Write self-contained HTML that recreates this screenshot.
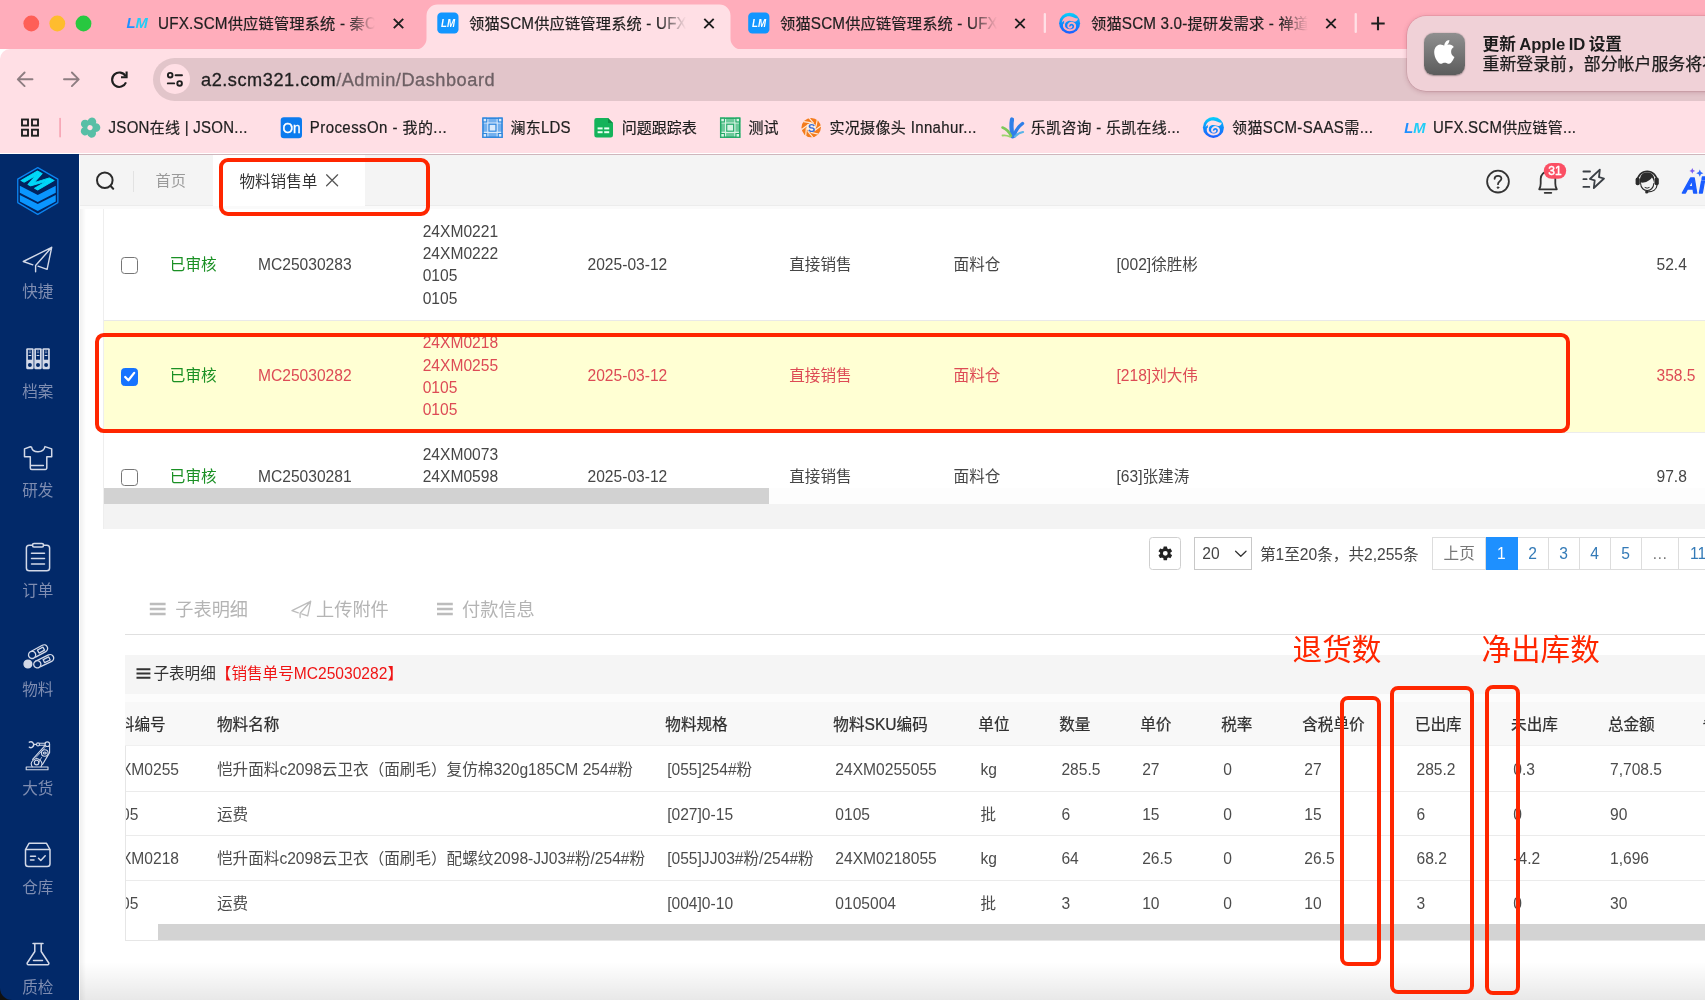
<!DOCTYPE html>
<html lang="zh-CN">
<head>
<meta charset="utf-8">
<title>领猫SCM供应链管理系统</title>
<style>
*{box-sizing:border-box;margin:0;padding:0}
html,body{width:1705px;height:1000px;overflow:hidden;background:#fff}
body{opacity:.999;font-family:"Liberation Sans","Noto Sans CJK SC",sans-serif;color:#333;position:relative}
.abs{position:absolute}
.t{position:absolute;white-space:nowrap;line-height:24px;height:24px}
/* ---------- browser chrome ---------- */
#tabstrip{left:0;top:0;width:1705px;height:49px;background:#ffadbb}
#toolbar{left:0;top:49px;width:1705px;height:104px;background:#ffdfe5;border-top-left-radius:10px}
#chromeline{left:0;top:153.7px;width:1705px;height:1.2px;background:#cfb6bc}
.tabtxt{-webkit-text-stroke:.22px #1f1f1f;font-size:15.25px;letter-spacing:.15px;margin-top:.6px;color:#1f1f1f;overflow:hidden}
.L{display:inline-block;white-space:pre;transform:scaleY(1.07);transform-origin:0 17.3px}
.bm{-webkit-text-stroke:.22px #1f1f1f;font-size:15px;color:#1f1f1f;margin-top:.6px}
/* ---------- app ---------- */
#sidebar{left:0;top:154px;width:79.2px;height:846px;background:#022969}
.sl{position:absolute;left:0;margin-top:.8px;width:75.6px;text-align:center;font-size:15.6px;color:#7f8db1;line-height:22px}
#apphead{left:79.5px;top:154.5px;width:1626px;height:51.5px;background:#f4f4f4;border-bottom:1px solid #ececec}
.c{position:absolute;white-space:nowrap;font-size:15.6px;line-height:22.3px;height:22.3px;color:#464646;margin-top:1px}
.red{color:#dd4b55}
.grn{color:#1a9024}
.cb{position:absolute;left:120.9px;width:17.2px;height:17.2px;border:1.4px solid #767676;border-radius:3.6px;background:#fff}
.pg{position:absolute;top:537.3px;height:32.5px;border:1px solid #ddd;border-left:0;background:#fff;font-size:15.6px;line-height:32.3px;text-align:center;color:#337ab7}
.th{position:absolute;white-space:nowrap;font-size:15.6px;line-height:22px;height:22px;color:#303030;font-weight:400;-webkit-text-stroke:.24px #303030;top:713.3px;margin-top:1px}
.td{position:absolute;white-space:nowrap;font-size:15.6px;line-height:22px;height:22px;color:#4c4c4c;margin-top:.8px}
.st{position:absolute;white-space:nowrap;font-size:18.2px;line-height:26px;height:26px;color:#b4b4b4;top:596.5px}
.ann{position:absolute;border:4.1px solid #ff2600;border-radius:8px}
.annt{position:absolute;white-space:nowrap;font-size:29.6px;line-height:40px;height:40px;color:#ff2600;top:629.8px}
</style>
</head>
<body>
<!-- ================= BROWSER CHROME ================= -->
<div id="tabstrip" class="abs"></div>
<div id="toolbar" class="abs"></div>
<div id="chromeline" class="abs"></div>

<!-- tab strip -->
<svg class="abs" style="left:0;top:0" width="1705" height="50" viewBox="0 0 1705 50">
  <path d="M415.5 49.5 A11 11 0 0 0 426.5 38.5 L426.5 15.5 A11 11 0 0 1 437.5 4.5 L719.5 4.5 A11 11 0 0 1 730.5 15.5 L730.5 38.5 A11 11 0 0 0 741.5 49.5 Z" fill="#ffdfe5"/>
  <circle cx="31.3" cy="23.5" r="7.9" fill="#fe5f57"/>
  <circle cx="57.3" cy="23.5" r="7.9" fill="#febc2e"/>
  <circle cx="83.5" cy="23.5" r="7.9" fill="#28c840"/>
  <!-- tab1 favicon LM -->
  <text x="126.500" y="28.300" font-family="Liberation Sans, sans-serif" font-size="14.600" font-weight="700" font-style="italic" textLength="21.300" lengthAdjust="spacingAndGlyphs"><tspan fill="#1f8fff">L</tspan><tspan fill="#21cdf6">M</tspan></text>
  <!-- tab2 favicon -->
  <rect x="437.3" y="12.6" width="21.2" height="21" rx="4.2" fill="#1296ff"/>
  <text x="441" y="27.4" font-family="Liberation Sans, sans-serif" font-size="10.5" font-weight="700" font-style="italic" fill="#fff" textLength="14" lengthAdjust="spacingAndGlyphs">LM</text>
  <!-- tab3 favicon -->
  <rect x="748.2" y="12.6" width="21.2" height="21" rx="4.2" fill="#1296ff"/>
  <text x="752" y="27.4" font-family="Liberation Sans, sans-serif" font-size="10.5" font-weight="700" font-style="italic" fill="#fff" textLength="14" lengthAdjust="spacingAndGlyphs">LM</text>
  <!-- tab4 favicon swirl -->
  <g transform="translate(1069.6 23.2)">
    <defs><linearGradient id="sg1" x1="0" y1="0" x2="0" y2="1"><stop offset="0" stop-color="#08d2fb"/><stop offset=".5" stop-color="#0d8ffb"/><stop offset="1" stop-color="#1f5cff"/></linearGradient></defs>
    <circle r="10.5" fill="url(#sg1)"/>
    <path d="M-7.800 .200 C-7.600 -4.800 -3.600 -7.300 0 -6.900 C3.500 -6.500 5.600 -4.400 8.400 -4.700 C8.100 -2.600 6.600 -1.400 5 -1.500 C3 -1.700 1.200 -2.900 -1.300 -2.300 C-3.800 -1.700 -4.700 .400 -4.800 2.200 C-5.400 1 -5.900 -.600 -5.300 -2.500 C-6.700 -2 -7.500 -1 -7.800 .200 Z" fill="#ffadbb"/>
    <path d="M-5.600 1.400 C-6.200 5.400 -2 7.900 2.500 6.700 C6.200 5.700 6.500 1.500 3.400 0 C.800 -1.200 -1.900 1 -1.300 3.300 C-.800 4.900 1.500 4.800 1.900 3.300" fill="none" stroke="#ffadbb" stroke-width="2" stroke-linecap="round"/>
  </g>
  <!-- close x -->
  <g stroke="#1f1f1f" stroke-width="1.9" stroke-linecap="butt" fill="none">
    <path d="M393.8 18.8 l9.4 9.4 M403.2 18.8 l-9.4 9.4"/>
    <path d="M704.3 18.8 l9.4 9.4 M713.7 18.8 l-9.4 9.4"/>
    <path d="M1015.3 18.8 l9.4 9.4 M1024.7 18.8 l-9.4 9.4"/>
    <path d="M1326.3 18.8 l9.4 9.4 M1335.7 18.8 l-9.4 9.4"/>
    <path d="M1371.3 23.5 h13.4 M1378 16.8 v13.4" stroke-width="2.1"/>
  </g>
  <rect x="1043.700" y="13" width="2.300" height="20" rx="1.100" fill="#ffe0e6"/>
  <rect x="1354.600" y="13" width="2.300" height="20" rx="1.100" fill="#ffe0e6"/>
</svg>
<div class="t tabtxt" style="left:158px;top:11px;width:219px;-webkit-mask-image:linear-gradient(90deg,#000 190px,transparent 217px)"><span class="L">UFX.SCM</span>供应链管理系统<span class="L"> - </span>秦<span class="L">C</span></div>
<div class="t tabtxt" style="left:469px;top:11px;width:219px;-webkit-mask-image:linear-gradient(90deg,#000 190px,transparent 217px)">领猫<span class="L">SCM</span>供应链管理系统<span class="L"> - UFX</span></div>
<div class="t tabtxt" style="left:780px;top:11px;width:219px;-webkit-mask-image:linear-gradient(90deg,#000 190px,transparent 217px)">领猫<span class="L">SCM</span>供应链管理系统<span class="L"> - UFX</span></div>
<div class="t tabtxt" style="left:1091px;top:11px;width:219px;-webkit-mask-image:linear-gradient(90deg,#000 190px,transparent 217px)">领猫<span class="L">SCM 3.0-</span>提研发需求<span class="L"> - </span>禅道</div>

<!-- toolbar -->
<div class="abs" style="left:153.3px;top:57.5px;width:1600px;height:43.4px;border-radius:21.7px;background:#e2c5ca"></div>
<div class="abs" style="left:159.8px;top:64.2px;width:30px;height:30px;border-radius:15px;background:#ffdfe5"></div>
<svg class="abs" style="left:0;top:49px" width="200" height="60" viewBox="0 49 200 60" fill="none" stroke-linecap="round" stroke-linejoin="round">
  <path d="M32.5 79.3 H18 M24.6 72.5 L17.8 79.3 L24.6 86.1" stroke="#8d7d81" stroke-width="1.9"/>
  <path d="M64 79.3 H78.5 M71.9 72.5 L78.7 79.3 L71.9 86.1" stroke="#8d7d81" stroke-width="1.9"/>
  <path d="M125.6 76.2 A7.2 7.2 0 1 0 126 82.4" stroke="#1f1f1f" stroke-width="2.1" stroke-linecap="butt"/>
  <path d="M126.6 71.6 V77.2 H121" stroke="#1f1f1f" stroke-width="2.1" stroke-linecap="butt" stroke-linejoin="miter"/>
  <g stroke="#1f1f1f" stroke-width="1.9">
    <circle cx="170.2" cy="75.2" r="2.3"/><path d="M175.6 75.2 H182"/>
    <circle cx="179.6" cy="83.4" r="2.3"/><path d="M167.8 83.4 H174.2"/>
  </g>
</svg>
<div class="t" style="left:201px;top:68.1px;font-size:18.2px;letter-spacing:.52px;-webkit-text-stroke:.3px;color:#1f1f1f">a2.scm321.com<span style="color:#6d6064">/Admin/Dashboard</span></div>

<!-- notification -->
<div class="abs" style="left:1407px;top:16.4px;width:340px;height:74.4px;border-radius:19px;background:#f0d1d7;box-shadow:0 1px 5px rgba(120,40,60,.28),0 0 0 .5px rgba(160,90,105,.25)"></div>
<div class="abs" style="left:1423.8px;top:32.8px;width:41.4px;height:42px;border-radius:9.5px;background:linear-gradient(#8f8f8f,#5c5c5c);box-shadow:0 .5px 1.5px rgba(0,0,0,.35)"></div>
<svg class="abs" style="left:1434.200px;top:40.400px" width="22.600" height="27.800" viewBox="0 0 170 200" preserveAspectRatio="none"><path fill="#fff" d="M150.4 130.3c-2.8 6.4-6 12.300-9.800 17.700-5.100 7.300-9.300 12.300-12.500 15.100-5 4.600-10.300 6.900-16.100 7.100-4.100 0-9.100-1.200-14.800-3.600-5.800-2.400-11.100-3.500-15.900-3.500-5.100 0-10.600 1.200-16.400 3.500-5.900 2.400-10.600 3.700-14.200 3.800-5.500.2-11-2.200-16.500-7.300-3.500-3-7.900-8.300-13.100-15.700-5.600-7.900-10.300-17.100-13.900-27.600C3.300 108.500 1.400 97.500 1.400 86.900c0-12.200 2.600-22.700 7.900-31.500 4.100-7.100 9.700-12.600 16.500-16.700 6.900-4.100 14.300-6.200 22.300-6.300 4.400 0 10.100 1.400 17.200 4 7.100 2.700 11.600 4 13.600 4 1.500 0 6.600-1.600 15.200-4.700 8.100-2.900 15-4.100 20.600-3.700 15.200 1.200 26.700 7.200 34.300 18-13.600 8.200-20.400 19.800-20.200 34.600.1 11.500 4.300 21.100 12.500 28.700 3.700 3.500 7.900 6.200 12.500 8.200-1 2.900-2.100 5.700-3.200 8.400zM115.500 3.900c0 9-3.300 17.500-9.900 25.300-8 9.300-17.600 14.700-28 13.800-.1-1.100-.2-2.200-.2-3.400 0-8.700 3.800-18 10.500-25.600 3.400-3.900 7.600-7.100 12.800-9.600C105.900 1.900 110.800.6 115.400.3c.1 1.200.1 2.400.1 3.600z"/></svg>
<div class="t" style="left:1482.5px;top:32.6px;font-size:16.7px;font-weight:700;word-spacing:-1.2px;letter-spacing:-.05px;color:#1c1c1c">更新 Apple ID 设置</div>
<div class="t" style="left:1482.5px;top:53.3px;font-size:16.9px;-webkit-text-stroke:.25px;color:#1c1c1c">重新登录前，部分帐户服务将不</div>

<!-- bookmarks bar -->
<svg class="abs" style="left:0;top:104px" width="1705" height="48" viewBox="0 104 1705 48">
  <!-- apps grid -->
  <g fill="none" stroke="#1f1f1f" stroke-width="1.9">
    <rect x="22" y="119.5" width="6" height="6"/><rect x="32" y="119.5" width="6" height="6"/>
    <rect x="22" y="129.7" width="6" height="6"/><rect x="32" y="129.7" width="6" height="6"/>
  </g>
  <rect x="59.3" y="117.8" width="1.6" height="19.8" rx=".8" fill="#f7a2b1"/>
  <!-- JSON flower -->
  <g transform="translate(90 127.6) rotate(19)" fill="#57bfa6">
    <circle cx="0" cy="-6" r="4.3"/><circle cx="5.7" cy="-1.9" r="4.3"/><circle cx="3.5" cy="4.9" r="4.3"/><circle cx="-3.5" cy="4.9" r="4.3"/><circle cx="-5.7" cy="-1.9" r="4.3"/><circle r="5.5"/>
    <circle r="2.6" fill="#ffdfe5"/>
  </g>
  <!-- ProcessOn -->
  <rect x="280.7" y="117.3" width="21.3" height="21" rx="3.2" fill="#0b7bee"/>
  <text x="282.400" y="133.100" font-family="Liberation Sans, sans-serif" font-size="15" font-weight="400" fill="#fff" stroke="#fff" stroke-width=".35" textLength="18.200" lengthAdjust="spacingAndGlyphs">On</text>
  <!-- LDS grid -->
  <g>
    <rect x="482.3" y="117.5" width="20.4" height="20.4" fill="#74b0ee"/>
    <path d="M487.81 117.5 V137.9 M497.19 117.5 V137.9 M482.3 123.01 H502.7 M482.3 132.39 H502.7" stroke="#d9e9fb" stroke-width="1.1" fill="none"/>
    <rect x="483.0" y="118.2" width="19.0" height="19.0" fill="none" stroke="#2f86dc" stroke-width="1.5"/>
    <g fill="#d9e9fb" stroke="#2f86dc" stroke-width="1"><rect x="483.1" y="118.3" width="3.6" height="3.6"/><rect x="498.30" y="118.3" width="3.6" height="3.6"/><rect x="483.1" y="133.50" width="3.6" height="3.6"/><rect x="498.30" y="133.50" width="3.6" height="3.6"/>
    <rect x="489.10" y="124.30" width="6.8" height="6.8"/></g>
  </g>
  <!-- sheets -->
  <path d="M596.6 118 H608 L613 123 V135.2 A2.3 2.3 0 0 1 610.700 137.500 H596.6 A2.300 2.300 0 0 1 594.300 135.200 V120.300 A2.300 2.300 0 0 1 596.600 118 Z" fill="#14b35a"/>
  <path d="M608 118 L613 123 H608 Z" fill="#0c8e44"/>
  <g fill="#e8fff1"><rect x="597.6" y="127.4" width="5" height="2"/><rect x="604.2" y="127.4" width="5" height="2"/><rect x="597.6" y="131.2" width="5" height="2"/><rect x="604.2" y="131.2" width="5" height="2"/></g>
  <!-- test grid -->
  <g>
    <rect x="720" y="117.5" width="20.4" height="20.4" fill="#6cc99a"/>
    <path d="M725.51 117.5 V137.9 M734.89 117.5 V137.9 M720 123.01 H740.4 M720 132.39 H740.4" stroke="#d8f3e4" stroke-width="1.1" fill="none"/>
    <rect x="720.7" y="118.2" width="19.0" height="19.0" fill="none" stroke="#22a866" stroke-width="1.5"/>
    <g fill="#d8f3e4" stroke="#22a866" stroke-width="1"><rect x="720.8" y="118.3" width="3.6" height="3.6"/><rect x="736.00" y="118.3" width="3.6" height="3.6"/><rect x="720.8" y="133.50" width="3.6" height="3.6"/><rect x="736.00" y="133.50" width="3.6" height="3.6"/>
    <rect x="726.80" y="124.30" width="6.8" height="6.8"/></g>
  </g>
  <!-- orange camera icon -->
  <g transform="translate(811.2 127.6)">
    <circle r="9.7" fill="#f47b1c"/>
    <g stroke="#ffe9d6" stroke-width="1.2"><path d="M-2 -9.5 L2.500 -4.300 M6 -7.600 L4.800 -1 M9.500 -1.500 L3.500 2.800 M7.200 6.500 L-.5 4.800 M1.500 9.500 L-3.500 3.500 M-5.500 8 L-4.800 .5 M-9.500 2 L-3 -2.800 M-7.500 -6 L.5 -4.800"/></g>
    <circle r="4.700" fill="#fff1e4"/>
    <text x="-3.100" y="4" font-family="Liberation Sans, sans-serif" font-size="11" font-weight="700" fill="#3b6fd6">S</text>
  </g>
  <!-- lucky leaf fan -->
  <g transform="translate(1012.5 136.5)" stroke-linecap="round" fill="none">
    <path d="M0 0 C-1 -6 -1.5 -12 -0.5 -17" stroke="#2f7fe8" stroke-width="4.2"/>
    <path d="M1.5 -0.5 C3 -6 6 -10 10 -13" stroke="#2f7fe8" stroke-width="3.4"/>
    <path d="M-1.5 -0.5 C-3 -4 -6 -7.5 -10 -9" stroke="#7cc85a" stroke-width="2.6"/>
    <path d="M2.500 0 C5 -2.500 7.500 -4 10.500 -4.500" stroke="#58b4e8" stroke-width="2.2"/>
    <path d="M-2.500 0.300 C-5 -1 -7.500 -1.500 -10 -1" stroke="#9bd46a" stroke-width="1.8"/>
  </g>
  <!-- swirl -->
  <g transform="translate(1213.4 127.4)">
    <defs><linearGradient id="sg2" x1="0" y1="0" x2="0" y2="1"><stop offset="0" stop-color="#08d2fb"/><stop offset=".5" stop-color="#0d8ffb"/><stop offset="1" stop-color="#1f5cff"/></linearGradient></defs>
    <circle r="10.5" fill="url(#sg2)"/>
    <path d="M-7.800 .200 C-7.600 -4.800 -3.600 -7.300 0 -6.900 C3.500 -6.500 5.600 -4.400 8.400 -4.700 C8.100 -2.600 6.600 -1.400 5 -1.500 C3 -1.700 1.200 -2.900 -1.300 -2.300 C-3.800 -1.700 -4.700 .400 -4.800 2.200 C-5.400 1 -5.900 -.600 -5.300 -2.500 C-6.700 -2 -7.500 -1 -7.800 .200 Z" fill="#ffdfe5"/>
    <path d="M-5.600 1.400 C-6.200 5.400 -2 7.900 2.500 6.700 C6.200 5.700 6.500 1.500 3.400 0 C.800 -1.200 -1.900 1 -1.300 3.300 C-.800 4.900 1.500 4.800 1.900 3.300" fill="none" stroke="#ffdfe5" stroke-width="2" stroke-linecap="round"/>
  </g>
  <text x="1404.300" y="132.500" font-family="Liberation Sans, sans-serif" font-size="14.600" font-weight="700" font-style="italic" textLength="21.300" lengthAdjust="spacingAndGlyphs"><tspan fill="#1f8fff">L</tspan><tspan fill="#21cdf6">M</tspan></text>
</svg>
<div class="t bm" style="left:108.6px;top:115.3px;letter-spacing:.27px"><span class="L">JSON</span>在线<span class="L"> | JSON...</span></div>
<div class="t bm" style="left:309.8px;top:115.3px;letter-spacing:.43px"><span class="L">ProcessOn - </span>我的<span class="L">...</span></div>
<div class="t bm" style="left:510.6px;top:115.3px;letter-spacing:.2px">澜东<span class="L">LDS</span></div>
<div class="t bm" style="left:621.8px;top:115.3px">问题跟踪表</div>
<div class="t bm" style="left:748.6px;top:115.3px">测试</div>
<div class="t bm" style="left:829.4px;top:115.3px;letter-spacing:.35px">实况摄像头<span class="L"> Innahur...</span></div>
<div class="t bm" style="left:1030.8px;top:115.3px;letter-spacing:.26px">乐凯咨询<span class="L"> - </span>乐凯在线<span class="L">...</span></div>
<div class="t bm" style="left:1232px;top:115.3px;letter-spacing:.39px">领猫<span class="L">SCM-SAAS</span>需<span class="L">...</span></div>
<div class="t bm" style="left:1433px;top:115.3px;letter-spacing:.23px"><span class="L">UFX.SCM</span>供应链管<span class="L">...</span></div>

<!-- ================= APP ================= -->
<div id="sidebar" class="abs"></div>

<!-- sidebar -->
<svg class="abs" style="left:0;top:154px" width="80" height="846" viewBox="0 154 80 846" fill="none" stroke="#d3d9e8" stroke-width="1.5" stroke-linejoin="round" stroke-linecap="round">
  <!-- logo -->
  <g stroke="none">
    <path d="M37.76 167.6 L57.85 179.15 V202.6 L37.76 214.4 L17.74 202.6 V179.15 Z" fill="#02235f" stroke="#0b84f0" stroke-width="1.3"/>
    <path d="M19.84 185.8 L37.76 195.04 L55.75 185.8 V192.8 L37.76 202.04 L19.84 192.8 Z" fill="#0a96ff"/>
    <path d="M19.84 194.9 L37.76 204 L55.75 194.9 V201.55 L37.76 211 L19.84 201.55 Z" fill="#0a96ff"/>
    <text transform="matrix(0.866 0.5 -0.866 0.5 37.76 180.3)" x="-11.4" y="9.6" font-family="Liberation Sans, sans-serif" font-size="27.4" font-weight="700" fill="#00d8f8" stroke="#00d8f8" stroke-width="1.1" stroke-linejoin="round">M</text>
  </g>
  <!-- 快捷 paper plane -->
  <path d="M51.700 247.300 L23.300 261.500 L32.800 264.800 M51.700 247.300 L35.600 265.500 V271.800 M51.700 247.300 L47.100 269.300 L38 266.200" stroke-width="1.400"/>
  <!-- 档案 binders -->
  <g stroke="none" fill="#d3d9e8">
    <rect x="26.200" y="348.200" width="7.400" height="21" rx="1.100"/><rect x="34.300" y="348.200" width="7.400" height="21" rx="1.100"/><rect x="42.400" y="348.200" width="7.400" height="21" rx="1.100"/>
  </g>
  <g stroke="none" fill="#022969">
    <rect x="27.900" y="349.800" width="4" height="9.900"/><rect x="36" y="349.800" width="4" height="9.900"/><rect x="44.100" y="349.800" width="4" height="9.900"/>
    <circle cx="29.900" cy="365.100" r="2"/><circle cx="38" cy="365.100" r="2"/><circle cx="46.100" cy="365.100" r="2"/>
  </g>
  <g stroke="#d3d9e8" stroke-linecap="butt"><path d="M28.700 351 h2.400 M28.700 352.700 h2.400 M36.800 351 h2.400 M36.800 352.700 h2.400 M44.900 351 h2.400 M44.900 352.700 h2.400" stroke-width=".8" opacity=".75"/><path d="M28.500 355.500 h2.800 M36.600 355.500 h2.800 M44.700 355.500 h2.800" stroke-width="1.100"/></g>
  <!-- 研发 tshirt -->
  <path d="M30.300 446.800 L24.500 448.900 V456.700 H30.300 V468 A1.500 1.500 0 0 0 31.800 469.500 H45.300 A1.500 1.500 0 0 0 46.800 468 V456.700 H51.700 V448.900 L45 446.600 C43.500 453.200 32.800 453.400 31.600 447.300 Z M31.200 465.500 H43.400"/>
  <!-- 订单 clipboard -->
  <path d="M32.500 545.200 H29.200 A2.800 2.800 0 0 0 26.400 548 V568 A2.800 2.800 0 0 0 29.200 570.800 H46.800 A2.800 2.800 0 0 0 49.600 568 V548 A2.800 2.800 0 0 0 46.800 545.200 H43.500"/>
  <rect x="32.500" y="543.400" width="11" height="3.600" rx="1.500"/>
  <path d="M31.500 553.200 H44.500 M31.500 558.600 H44.500 M31.500 564 H44.500"/>
  <!-- 物料 rolls -->
  <g stroke-width="1.3">
    <g transform="translate(32.1 654.9) rotate(-28.5)"><path d="M0 -3.6 H13.6 A3.6 3.6 0 0 1 13.6 3.6 H2"/><rect x="7" y="-1.7" width="6.2" height="3.4"/><circle r="3.6" fill="#022969"/></g>
    <g transform="translate(37.3 664.3) rotate(-25.5)"><path d="M0 -3.6 H14.2 A3.6 3.600 0 0 1 14.200 3.600 H2"/><rect x="7.300" y="-1.700" width="6.200" height="3.400"/><circle r="3.600" fill="#022969"/></g>
    <circle cx="27.9" cy="664" r="3.9" fill="#d3d9e8"/>
  </g>
  <!-- 大货 robot arm -->
  <g stroke-width="1.1">
    <rect x="26.2" y="767" width="21.8" height="2.8"/>
    <path d="M32.2 766.800 A5.200 5.200 0 1 1 41 766.800"/>
    <circle cx="36.600" cy="762.600" r="2.300"/>
    <path d="M32.600 759.300 L45.200 745.300 M42.500 764.500 L49.600 752.600 V744.500"/>
    <path d="M38.500 763 L41.500 757.500 M36 757.500 L45 747.500" stroke-width=".8"/>
    <circle cx="44.800" cy="753" r="3.300"/><ellipse cx="44.800" cy="753" rx="1.500" ry="1"/>
    <circle cx="47.300" cy="744.200" r="2.300"/>
    <path d="M45.200 743.300 H39.500 M45.200 745.300 H39.500 M36.500 744.400 H34.300"/>
    <circle cx="38" cy="744.400" r="1.500"/>
    <path d="M29.300 742.200 A2.900 2.900 0 1 1 29.300 747.200" stroke-width="1.400"/>
  </g>
  <!-- 仓库 box -->
  <path d="M25.500 849.500 L29 843.300 H46.500 L50 849.500 V863.800 A2.800 2.800 0 0 1 47.200 866.600 H28.300 A2.800 2.800 0 0 1 25.500 863.800 Z M25.500 849.500 H50"/>
  <path d="M30.500 856.200 H35.500 M30.500 860 H34 M38.500 858.300 L40.800 860.500 L45.200 855.800"/>
  <!-- 质检 flask -->
  <path d="M33 943.600 H43 M34.800 943.600 V951.500 L27.200 963 A1.300 1.300 0 0 0 28.300 964.800 H47.700 A1.300 1.300 0 0 0 48.800 963 L41.200 951.500 V943.600 M33.500 960.600 H42.500"/>
  <!-- window corner -->
  <path d="M0 988 V1000 H12 A12 12 0 0 1 0 988 Z" fill="#111" stroke="none"/>
</svg>
<div class="sl" style="top:280.700px">快捷</div>
<div class="sl" style="top:380px">档案</div>
<div class="sl" style="top:479.700px">研发</div>
<div class="sl" style="top:579px">订单</div>
<div class="sl" style="top:678px">物料</div>
<div class="sl" style="top:777.600px">大货</div>
<div class="sl" style="top:876.200px">仓库</div>
<div class="sl" style="top:976px">质检</div>
<div class="abs" style="left:79.500px;top:154.500px;width:6px;height:846px;background:linear-gradient(90deg,rgba(0,0,0,.06),rgba(0,0,0,0))"></div>
<div id="apphead" class="abs"></div>

<!-- app header -->
<div class="abs" style="left:79.5px;top:206px;width:1626px;height:3px;background:#fafafa"></div>
<div class="abs" style="left:213px;top:154.5px;width:152.3px;height:51.5px;background:#fff"></div>
<div class="abs" style="left:132.600px;top:171px;width:1.3px;height:21px;background:#e2e2e2"></div>
<svg class="abs" style="left:90px;top:160px" width="300" height="44" viewBox="90 160 300 44" fill="none" stroke="#2b2b2b" stroke-linecap="round">
  <circle cx="104.800" cy="180.300" r="7.800" stroke-width="2"/><path d="M110.600 186.100 L113.200 188.700" stroke-width="2.1"/>
  <path d="M326.600 174.800 L337.600 185.800 M337.600 174.800 L326.600 185.800" stroke="#555" stroke-width="1.25"/>
</svg>
<div class="c" style="left:155.600px;top:168.800px;color:#9a9a9a;font-size:15.2px">首页</div>
<div class="c" style="left:239.400px;top:169.600px;color:#333">物料销售单</div>
<svg class="abs" style="left:1480px;top:158px" width="225" height="44" viewBox="1480 158 225 44" fill="none" stroke="#333" stroke-width="1.8" stroke-linecap="round" stroke-linejoin="round">
  <circle cx="1498" cy="181.600" r="10.900"/>
  <path d="M1494.600 178.800 C1494.600 174.800 1501.500 174.900 1501.400 178.700 C1501.300 181 1498 181.300 1498 184.200" />
  <circle cx="1498" cy="187.600" r=".8" fill="#333" stroke-width="1"/>
  <!-- bell -->
  <path d="M1539.200 189.300 H1556.800 C1555.700 187.600 1555.300 185.500 1555.300 183.500 V178.800 A7.300 7.300 0 0 0 1540.700 178.800 V183.500 C1540.700 185.500 1540.300 187.600 1539.200 189.300 Z M1544.700 192.800 H1551.300"/>
  <rect x="1543.800" y="163" width="22.400" height="15.700" rx="7.850" fill="#fb4f64" stroke="none"/>
  <text x="1548.200" y="175.200" font-family="Liberation Sans, sans-serif" font-size="12.400" font-weight="400" fill="#fff" stroke="#fff" stroke-width=".45" textLength="13.400" lengthAdjust="spacingAndGlyphs">31</text>
  <!-- lightning -->
  <g stroke="#3a3f45">
  <path d="M1583.400 171.500 H1590 M1583.400 179.200 H1586.600 M1583.400 186.900 H1589.300"/>
  <path d="M1599.800 169.600 L1589.900 179 L1594.700 180.300 L1593.800 188 L1604 178.500 L1599 177.200 Z"/>
  </g>
  <!-- headset -->
  <path d="M1637.400 181 A9.800 9.800 0 0 1 1657 181" stroke="#2b2b2b" stroke-width="1.700"/>
  <g stroke="none" fill="#2b2b2b">
    <rect x="1635.600" y="177.600" width="4.200" height="7.600" rx="1.900"/><rect x="1654.600" y="177.600" width="4.200" height="7.600" rx="1.900"/>
    <path d="M1640.300 184 C1638.800 176.500 1642 172.300 1647.200 172.300 C1652.400 172.300 1655.600 176.500 1654.100 184 C1653.900 180.800 1653 178.500 1651.900 177.500 C1649.500 181.300 1644 183.200 1641.300 182.500 C1640.800 182.900 1640.500 183.400 1640.300 184 Z"/>
    <circle cx="1646.700" cy="191.900" r="1.600"/>
  </g>
  <path d="M1640.600 183.500 C1641 192.800 1653.400 192.800 1653.800 183.500" stroke="#2b2b2b" stroke-width="1.100"/>
  <path d="M1657 185.200 C1656.600 189.600 1652.500 191.900 1648 191.900" stroke="#2b2b2b" stroke-width="1.200"/>
  <path d="M1645 187.600 Q1647.100 188.900 1649.200 187.600" stroke="#2b2b2b" stroke-width="1"/>
  <!-- Ai -->
  <text x="1682.800" y="193.400" font-family="Liberation Sans, sans-serif" font-size="21.5" font-weight="700" font-style="italic" fill="#1a5cff" stroke="#1a5cff" stroke-width="1.300" stroke-linejoin="round" letter-spacing=".6">Ai</text>
  <path d="M1692.300 168 l.9 2 2 .9 -2 .9 -.9 2 -.9 -2 -2 -.9 2 -.9z" fill="#7a5cf0" stroke="none"/>
  <path d="M1699.800 169.600 l1.100 2.500 2.500 1.100 -2.500 1.100 -1.100 2.500 -1.100 -2.500 -2.500 -1.100 2.500 -1.100z" fill="#2f6bff" stroke="none"/>
</svg>

<!-- main table -->
<div class="abs" style="left:103px;top:209px;width:1px;height:320px;background:#eeeeee"></div>
<div class="abs" style="left:103.500px;top:319.600px;width:1602px;height:1px;background:#e9e9e9"></div>
<div class="abs" style="left:103.500px;top:320.600px;width:1602px;height:111px;background:#ffffd3"></div>
<div class="abs" style="left:103.500px;top:431.600px;width:1602px;height:1px;background:#ececec"></div>

<div class="cb" style="top:256.800px"></div>
<div class="c grn" style="left:169.800px;top:253.200px">已审核</div>
<div class="c" style="left:258px;top:253.200px">MC25030283</div>
<div class="c" style="left:422.700px;top:219.600px">24XM0221</div>
<div class="c" style="left:422.700px;top:241.900px">24XM0222</div>
<div class="c" style="left:422.700px;top:264.200px">0105</div>
<div class="c" style="left:422.700px;top:286.500px">0105</div>
<div class="c" style="left:587.500px;top:253.200px">2025-03-12</div>
<div class="c" style="left:789.200px;top:253.200px">直接销售</div>
<div class="c" style="left:953.600px;top:253.200px">面料仓</div>
<div class="c" style="left:1116.500px;top:253.200px">[002]徐胜彬</div>
<div class="c" style="left:1656.500px;top:253.200px">52.4</div>

<div class="cb" style="top:368.400px;background:#1573ff;border-color:#1573ff"></div>
<svg class="abs" style="left:120.900px;top:368.400px" width="17.200" height="17.200" viewBox="0 0 17.200 17.200" fill="none" stroke="#fff" stroke-width="2.300" stroke-linecap="round" stroke-linejoin="round"><path d="M4.200 9 L7.400 12.200 L13.200 4.900"/></svg>
<div class="c grn" style="left:169.800px;top:364.100px">已审核</div>
<div class="c red" style="left:258px;top:364.100px">MC25030282</div>
<div class="c red" style="left:422.700px;top:331.400px">24XM0218</div>
<div class="c red" style="left:422.700px;top:353.700px">24XM0255</div>
<div class="c red" style="left:422.700px;top:376px">0105</div>
<div class="c red" style="left:422.700px;top:398.300px">0105</div>
<div class="c red" style="left:587.500px;top:364.100px">2025-03-12</div>
<div class="c red" style="left:789.200px;top:364.100px">直接销售</div>
<div class="c red" style="left:953.600px;top:364.100px">面料仓</div>
<div class="c red" style="left:1116.500px;top:364.100px">[218]刘大伟</div>
<div class="c red" style="left:1656.500px;top:364.100px">358.5</div>

<div class="cb" style="top:469px"></div>
<div class="c grn" style="left:169.800px;top:465.200px">已审核</div>
<div class="c" style="left:258px;top:465.200px">MC25030281</div>
<div class="c" style="left:422.700px;top:442.700px">24XM0073</div>
<div class="c" style="left:422.700px;top:465.200px">24XM0598</div>
<div class="c" style="left:587.500px;top:465.200px">2025-03-12</div>
<div class="c" style="left:789.200px;top:465.200px">直接销售</div>
<div class="c" style="left:953.600px;top:465.200px">面料仓</div>
<div class="c" style="left:1116.500px;top:465.200px">[63]张建涛</div>
<div class="c" style="left:1656.500px;top:465.200px">97.8</div>

<div class="abs" style="left:103.500px;top:487.700px;width:1602px;height:16px;background:#fdfdfd"></div>
<div class="abs" style="left:103.500px;top:487.700px;width:665px;height:16px;background:#d2d2d2"></div>
<div class="abs" style="left:103.500px;top:503.700px;width:1602px;height:25px;background:#f3f3f3"></div>

<!-- pager -->
<div class="abs" style="left:1149.200px;top:537px;width:31.500px;height:32.800px;border:1.2px solid #cfcfcf;border-radius:3.500px;background:#fff"></div>
<svg class="abs" style="left:1156.700px;top:545.200px" width="16.600" height="16.600" viewBox="0 0 24 24"><path fill="#222" d="M19.430 12.980c.040-.320.070-.640.070-.980s-.030-.660-.070-.980l2.110-1.650a.5.500 0 0 0 .120-.640l-2-3.460a.5.500 0 0 0-.610-.220l-2.490 1a7.300 7.300 0 0 0-1.690-.980l-.380-2.650A.490.490 0 0 0 14 2h-4a.490.490 0 0 0-.490.420l-.380 2.650c-.610.250-1.170.590-1.690.980l-2.490-1a.5.500 0 0 0-.610.220l-2 3.460a.5.500 0 0 0 .120.640l2.110 1.650c-.040.320-.070.650-.070.980s.030.660.070.980l-2.110 1.650a.5.500 0 0 0-.120.640l2 3.460c.120.220.390.300.610.220l2.490-1c.520.400 1.080.730 1.690.980l.380 2.650c.030.240.240.420.490.420h4c.250 0 .460-.180.490-.420l.380-2.650c.610-.250 1.170-.590 1.690-.980l2.490 1c.230.090.490 0 .610-.220l2-3.460a.5.500 0 0 0-.120-.640l-2.110-1.650zM12 15.500a3.500 3.500 0 1 1 0-7 3.500 3.500 0 0 1 0 7z"/></svg>
<div class="abs" style="left:1194px;top:537px;width:57.800px;height:32.800px;border:1.2px solid #c8c8c8;background:#fff"></div>
<div class="c" style="left:1202.300px;top:542.100px;font-size:15.6px;color:#444">20</div>
<svg class="abs" style="left:1233.600px;top:549px" width="14" height="10" viewBox="0 0 14 10" fill="none" stroke="#333" stroke-width="1.300" stroke-linecap="round" stroke-linejoin="round"><path d="M1.600 2.300 L6.800 7.200 L12 2.300"/></svg>
<div class="c" style="left:1260px;top:543.300px;color:#444">第1至20条，共2,255条</div>
<div class="pg" style="left:1432px;width:54.300px;border-left:1px solid #ddd;color:#777">上页</div>
<div class="pg" style="left:1486.200px;width:31.400px;background:#1e90ff;border-color:#1e90ff;color:#fff">1</div>
<div class="pg" style="left:1517.500px;width:31px">2</div>
<div class="pg" style="left:1548.500px;width:31px">3</div>
<div class="pg" style="left:1579.500px;width:31px">4</div>
<div class="pg" style="left:1610.500px;width:31px">5</div>
<div class="pg" style="left:1641.500px;width:37.500px;color:#777">…</div>
<div class="pg" style="left:1679px;width:40px;text-align:left;padding-left:11px">11</div>

<!-- sub tabs -->
<svg class="abs" style="left:140px;top:598px" width="330" height="24" viewBox="140 598 330 24" fill="none" stroke="#bcbcbc" stroke-width="2.500">
  <path d="M149.800 604 H165.600 M149.800 609 H165.600 M149.800 614 H165.600"/>
  <path d="M437 604 H452.800 M437 609 H452.800 M437 614 H452.800"/>
  <path d="M310.7 601.3 L292.0 610.7 L298.3 612.8 M310.7 601.3 L300.1 613.3 L300.1 617.5 M310.7 601.3 L307.7 615.8 L301.7 613.8" stroke-width="1.300" stroke-linejoin="round" stroke-linecap="round"/>
</svg>
<div class="st" style="left:175.300px">子表明细</div>
<div class="st" style="left:316px">上传附件</div>
<div class="st" style="left:462px">付款信息</div>
<div class="abs" style="left:125.300px;top:633.600px;width:1580px;height:1.200px;background:#e0e0e0"></div>

<!-- sub table -->
<div class="abs" style="left:125.300px;top:654.600px;width:1580px;height:39px;background:#f5f5f5"></div>
<div class="abs" style="left:125.300px;top:693.600px;width:1580px;height:8px;background:#fcfcfc"></div>
<svg class="abs" style="left:136px;top:666px" width="16" height="16" viewBox="136 666 16 16" stroke="#333" stroke-width="1.900"><path d="M136.500 669.200 H150.400 M136.500 673.500 H150.400 M136.500 677.800 H150.400"/></svg>
<div class="c" style="left:153.400px;top:662.300px;color:#333">子表明细<span style="color:#f01414">【销售单号MC25030282】</span></div>
<div class="abs" style="left:125.300px;top:701.800px;width:1580px;height:44.600px;background:#f8f8f8;border-bottom:1px solid #f0f0f0"></div>
<div class="abs" style="left:125.300px;top:790.700px;width:1580px;height:1px;background:#ebebeb"></div>
<div class="abs" style="left:125.300px;top:835.400px;width:1580px;height:1px;background:#ebebeb"></div>
<div class="abs" style="left:125.300px;top:880px;width:1580px;height:1px;background:#ebebeb"></div>
<div class="abs" style="left:125.300px;top:746.400px;width:1.200px;height:194px;background:#e6e6e6"></div>
<div class="abs" style="left:125.300px;top:939.800px;width:1580px;height:1px;background:#e6e6e6"></div>
<div class="abs" style="left:157.800px;top:924.400px;width:1548px;height:15.400px;background:#d3d3d3"></div>
<div id="subclip" class="abs" style="left:125.500px;top:700px;width:1580px;height:225px;overflow:hidden">
<div class="th" style="left:-22.3px;top:13.3px">物料编号</div>
<div class="th" style="left:91.5px;top:13.3px">物料名称</div>
<div class="th" style="left:539.8px;top:13.3px">物料规格</div>
<div class="th" style="left:707.8px;top:13.3px">物料SKU编码</div>
<div class="th" style="left:852.8px;top:13.3px">单位</div>
<div class="th" style="left:933.7px;top:13.3px">数量</div>
<div class="th" style="left:1014.7px;top:13.3px">单价</div>
<div class="th" style="left:1095.7px;top:13.3px">税率</div>
<div class="th" style="left:1176.7px;top:13.3px">含税单价</div>
<div class="th" style="left:1289.3px;top:13.3px">已出库</div>
<div class="th" style="left:1385.6px;top:13.3px">未出库</div>
<div class="th" style="left:1482.4px;top:13.3px">总金额</div>
<div class="th" style="left:1577.2px;top:13.3px">备注</div>
<div class="td" style="left:-21.9px;top:58.3px">24XM0255</div>
<div class="td" style="left:91.5px;top:58.3px">恺升面料c2098云卫衣（面刷毛）复仿棉320g185CM 254#粉</div>
<div class="td" style="left:541.7px;top:58.3px">[055]254#粉</div>
<div class="td" style="left:709.8px;top:58.3px">24XM0255055</div>
<div class="td" style="left:854.9px;top:58.3px">kg</div>
<div class="td" style="left:935.9px;top:58.3px">285.5</div>
<div class="td" style="left:1016.7px;top:58.3px">27</div>
<div class="td" style="left:1097.7px;top:58.3px">0</div>
<div class="td" style="left:1178.8px;top:58.3px">27</div>
<div class="td" style="left:1291.0px;top:58.3px">285.2</div>
<div class="td" style="left:1387.8px;top:58.3px">0.3</div>
<div class="td" style="left:1484.5px;top:58.3px">7,708.5</div>
<div class="td" style="left:-21.9px;top:102.8px">0105</div>
<div class="td" style="left:91.5px;top:102.8px">运费</div>
<div class="td" style="left:541.7px;top:102.8px">[027]0-15</div>
<div class="td" style="left:709.8px;top:102.8px">0105</div>
<div class="td" style="left:854.9px;top:102.8px">批</div>
<div class="td" style="left:935.9px;top:102.8px">6</div>
<div class="td" style="left:1016.7px;top:102.8px">15</div>
<div class="td" style="left:1097.7px;top:102.8px">0</div>
<div class="td" style="left:1178.8px;top:102.8px">15</div>
<div class="td" style="left:1291.0px;top:102.8px">6</div>
<div class="td" style="left:1387.8px;top:102.8px">0</div>
<div class="td" style="left:1484.5px;top:102.8px">90</div>
<div class="td" style="left:-21.9px;top:147.3px">24XM0218</div>
<div class="td" style="left:91.5px;top:147.3px">恺升面料c2098云卫衣（面刷毛）配螺纹2098-JJ03#粉/254#粉</div>
<div class="td" style="left:541.7px;top:147.3px">[055]JJ03#粉/254#粉</div>
<div class="td" style="left:709.8px;top:147.3px">24XM0218055</div>
<div class="td" style="left:854.9px;top:147.3px">kg</div>
<div class="td" style="left:935.9px;top:147.3px">64</div>
<div class="td" style="left:1016.7px;top:147.3px">26.5</div>
<div class="td" style="left:1097.7px;top:147.3px">0</div>
<div class="td" style="left:1178.8px;top:147.3px">26.5</div>
<div class="td" style="left:1291.0px;top:147.3px">68.2</div>
<div class="td" style="left:1387.8px;top:147.3px">-4.2</div>
<div class="td" style="left:1484.5px;top:147.3px">1,696</div>
<div class="td" style="left:-21.9px;top:192.0px">0105</div>
<div class="td" style="left:91.5px;top:192.0px">运费</div>
<div class="td" style="left:541.7px;top:192.0px">[004]0-10</div>
<div class="td" style="left:709.8px;top:192.0px">0105004</div>
<div class="td" style="left:854.9px;top:192.0px">批</div>
<div class="td" style="left:935.9px;top:192.0px">3</div>
<div class="td" style="left:1016.7px;top:192.0px">10</div>
<div class="td" style="left:1097.7px;top:192.0px">0</div>
<div class="td" style="left:1178.8px;top:192.0px">10</div>
<div class="td" style="left:1291.0px;top:192.0px">3</div>
<div class="td" style="left:1387.8px;top:192.0px">0</div>
<div class="td" style="left:1484.5px;top:192.0px">30</div>
</div>

<!-- annotations -->
<div class="abs" style="left:79.500px;top:962px;width:1626px;height:38px;background:linear-gradient(rgba(0,0,0,0),rgba(0,0,0,.09));pointer-events:none"></div>
<div class="ann" style="left:218.700px;top:158.400px;width:211.500px;height:57.800px;border-width:4.150px;border-radius:9px"></div>
<div class="ann" style="left:95.100px;top:333.400px;width:1474.900px;height:99.500px;border-width:4.150px;border-radius:8.800px"></div>
<div class="ann" style="left:1339.800px;top:696.200px;width:41.500px;height:269.800px"></div>
<div class="ann" style="left:1389.700px;top:686px;width:84.500px;height:307.700px"></div>
<div class="ann" style="left:1485.100px;top:685px;width:35.100px;height:310.300px"></div>
<div class="annt" style="left:1292.600px">退货数</div>
<div class="annt" style="left:1481.400px">净出库数</div>

</body>
</html>
